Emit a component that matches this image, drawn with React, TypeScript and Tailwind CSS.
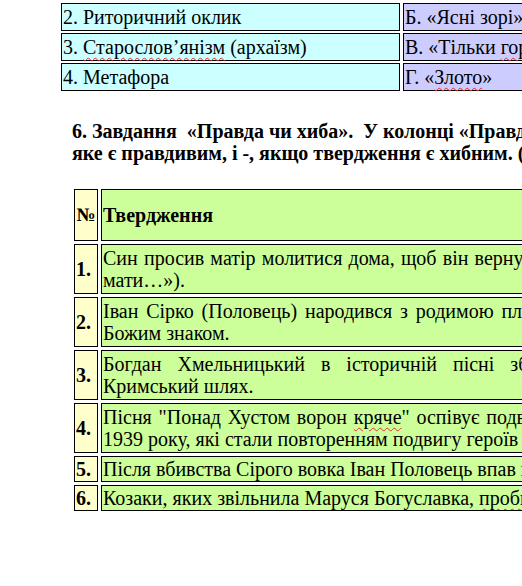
const matches = [
  { left: "2. Риторичний оклик", right: "Б. «Ясні зорі» ", rightEnd: "", wavyLeft: [] as string[] },
  { left: "3. ", right: "В. «Тільки ", rightEnd: "", wavyLeft: ["Старослов’янізм", "(архаїзм)"] },
  { left: "4. Метафора", right: "Г. «", rightEnd: "»", wavyLeft: [] },
];

type Row = {
  num: string;
  lines: { text: string; spacing?: string }[];
  tall: boolean;
};

const rows: Row[] = [
  {
    num: "1.",
    tall: true,
    lines: [
      { text: "Син просив матір молитися дома, щоб він вернувся живим («Ой, не плач, моя", spacing: "[word-spacing:1.2px]" },
      { text: "мати…»)." },
    ],
  },
  {
    num: "2.",
    tall: true,
    lines: [
      { text: "Іван Сірко (Половець) народився з родимою плямою, що вважалося", spacing: "[word-spacing:2.8px]" },
      { text: "Божим знаком." },
    ],
  },
  {
    num: "3.",
    tall: true,
    lines: [
      { text: "Богдан Хмельницький в історичній пісні збирав військо на", spacing: "[word-spacing:11px]" },
      { text: "Кримський шлях." },
    ],
  },
  {
    num: "4.",
    tall: true,
    lines: [
      { text: "Пісня \"Понад Хустом ворон кряче\" оспівує подвиг захисників Карпатської України", spacing: "[word-spacing:1.8px]" },
      { text: "1939 року, які стали повторенням подвигу героїв Крут." },
    ],
  },
  {
    num: "5.",
    tall: false,
    lines: [{ text: "Після вбивства Сірого вовка Іван Половець впав на коліна й заплакав." }],
  },
  {
    num: "6.",
    tall: false,
    lines: [{ text: "Козаки, яких звільнила Маруся Богуславка, пробилися додому." }],
  },
];

function Wavy({ children }: { children: React.ReactNode }) {
  return (
    <span className="underline decoration-wavy decoration-[#e03030] decoration-1 underline-offset-[3px]">
      {children}
    </span>
  );
}

export default function App() {
  return (
    <div className="w-[522px] h-[586px] overflow-hidden bg-white text-black font-['Liberation_Serif','Times_New_Roman',serif]">
      {/* matching table */}
      <div className="flex flex-col gap-[2px] pl-[61px] pt-[3px]">
        {matches.map((m, i) => (
          <div key={i} className="flex gap-[3px]">
            <div className="w-[339px] h-[28px] shrink-0 border border-black bg-[#ccffff] px-[1px] text-[20px] leading-[26px] whitespace-nowrap">
              {m.left}
              {m.wavyLeft.length > 0 && (
                <>
                  <Wavy>{m.wavyLeft[0]}</Wavy> {m.wavyLeft[1]}
                </>
              )}
            </div>
            <div className="w-[260px] h-[28px] shrink-0 border border-black bg-[#ccccff] px-[1px] text-[20px] leading-[26px] whitespace-nowrap">
              {m.right}
              {i === 1 && <Wavy>гори</Wavy>}
              {i === 2 && (
                <>
                  <Wavy>Злото</Wavy>
                  {m.rightEnd}
                </>
              )}
            </div>
          </div>
        ))}
      </div>

      {/* task heading */}
      <div className="pl-[72px] pt-[29px] text-[20px] font-bold leading-[22px] whitespace-nowrap">
        <div>6. Завдання&nbsp; «Правда чи хиба».&nbsp; У колонці «Правда/хиба» поставте +, якщо</div>
        <div>яке є правдивим, і -, якщо твердження є хибним. (6 балів)</div>
      </div>

      {/* true / false table */}
      <div className="flex flex-col gap-[3px] pl-[74px] pt-[25px]">
        <div className="flex gap-[3px]">
          <div className="w-[24px] h-[52px] shrink-0 border border-black bg-[#ffffcc] flex items-center justify-center text-[19px] font-bold">
            №
          </div>
          <div className="w-[560px] h-[52px] shrink-0 border border-black bg-[#ccff99] flex items-center px-[1px] text-[20px] font-bold">
            Твердження
          </div>
        </div>
        {rows.map((r) => (
          <div key={r.num} className="flex gap-[3px]">
            <div
              className={`w-[24px] shrink-0 border border-black bg-[#ffffcc] flex items-center px-[1px] text-[20px] font-bold ${
                r.tall ? "h-[50px]" : "h-[26px]"
              }`}
            >
              {r.num}
            </div>
            <div
              className={`w-[560px] shrink-0 border border-black bg-[#ccff99] px-[1px] text-[20px] leading-[22px] overflow-hidden flex flex-col justify-center ${
                r.tall ? "h-[50px]" : "h-[26px]"
              }`}
            >
              {r.lines.map((l, j) => (
                <div key={j} className={`whitespace-nowrap ${l.spacing ?? ""}`}>
                  {r.num === "4." && j === 0 ? (
                    <>
                      Пісня "Понад Хустом ворон <Wavy>кряче</Wavy>" оспівує подвиг захисників Карпатської України
                    </>
                  ) : r.num === "6." ? (
                    <>
                      Козаки, яких звільнила Маруся Богуславка, <Wavy>пробилися</Wavy> додому.
                    </>
                  ) : (
                    l.text
                  )}
                </div>
              ))}
            </div>
          </div>
        ))}
      </div>
    </div>
  );
}
